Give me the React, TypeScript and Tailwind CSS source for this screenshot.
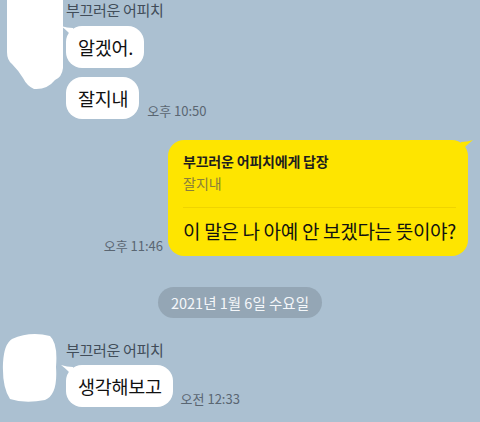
import React from "react";

const font = { fontFamily: '"Noto Sans CJK KR", "Noto Sans", sans-serif' };

function LeftTail() {
  return (
    <svg className="absolute left-[-5px] top-[0px]" width="12" height="12" viewBox="0 0 12 12">
      <path d="M0,0 Q6,2 12,2 L12,12 Q8,6 0,0 Z" fill="#ffffff" />
    </svg>
  );
}

function RightTail() {
  return (
    <svg className="absolute right-[-5px] top-[0px]" width="12" height="12" viewBox="0 0 12 12">
      <path d="M12,0 Q6,2 0,2 L0,12 Q4,6 12,0 Z" fill="#fee500" />
    </svg>
  );
}

function WhiteBubble({ text, tail }: { text: string; tail?: boolean }) {
  return (
    <div className="relative bg-white rounded-[16px] h-[42px] pl-3 pr-[11px] flex items-center text-[18.5px] text-[#111] tracking-[-0.3px] whitespace-nowrap">
      {tail && <LeftTail />}
      <span className="leading-[24px]">{text}</span>
    </div>
  );
}

function Time({ t }: { t: string }) {
  return <span className="text-[13px] leading-[16px] text-[#5a6672] whitespace-nowrap">{t}</span>;
}

export default function App() {
  return (
    <div className="w-[480px] h-[422px] bg-[#abc0d1] overflow-hidden flex flex-col" style={font}>
      {/* group 1 */}
      <div className="flex">
        <div className="w-[66px] shrink-0">
          <svg width="66" height="92" viewBox="0 0 66 92">
            <path
              d="M7,0 L63,0 L63,68 Q62,77 55,80 Q47,90 34,89 Q27,86 23,78 Q18,70 12,64 Q7,60 7,52 Z"
              fill="#ffffff"
            />
          </svg>
        </div>
        <div className="flex flex-col">
          <div className="text-[15px] leading-[20px] text-[#414d59] tracking-[-0.3px]">부끄러운 어피치</div>
          <div className="mt-[6px] flex">
            <WhiteBubble text="알겠어." tail />
          </div>
          <div className="mt-[9px] flex items-end gap-2">
            <WhiteBubble text="잘지내" />
            <div className="mb-[-2px]">
              <Time t="오후 10:50" />
            </div>
          </div>
        </div>
      </div>

      {/* yellow */}
      <div className="mt-[21px] flex justify-end items-end gap-[5px] pr-3">
        <div>
          <Time t="오후 11:46" />
        </div>
        <div className="relative bg-[#fee500] rounded-[16px] w-[300px] pl-[15px] pr-2 pt-3 pb-[13px] whitespace-nowrap">
          <RightTail />
          <div className="text-[14px] leading-[18px] font-bold text-[#1e1e1e] tracking-[-0.2px]">부끄러운 어피치에게 답장</div>
          <div className="mt-[4px] text-[14px] leading-[18px] text-[#8a7f3a]">잘지내</div>
          <div className="mt-[15px] mr-1 h-px bg-[#efd400]" />
          <div className="mt-[11px] text-[19px] leading-[24px] text-[#111] tracking-[-0.3px]">
            이 말은 나 아예 안 보겠다는 뜻이야?
          </div>
        </div>
      </div>

      {/* date pill */}
      <div className="mt-[31px] flex justify-center">
        <div className="h-[31px] px-[13px] rounded-full bg-[#94a6b5] flex items-center text-[14.5px] text-[#f4f7fa]">
          2021년 1월 6일 수요일
        </div>
      </div>

      {/* group 2 */}
      <div className="mt-[22px] flex">
        <div className="w-[66px] shrink-0">
          <svg className="mt-[-7px]" width="66" height="72" viewBox="0 0 66 72">
            <path
              d="M12,6 Q30,-2 50,3 Q58,10 56,34 Q58,62 45,67 Q25,71 10,66 Q2,54 3,30 Q4,11 12,6 Z"
              fill="#ffffff"
            />
          </svg>
        </div>
        <div className="flex flex-col">
          <div className="text-[15px] leading-[20px] text-[#414d59] tracking-[-0.3px]">부끄러운 어피치</div>
          <div className="mt-[5px] flex items-end gap-2">
            <WhiteBubble text="생각해보고" tail />
            <div className="mb-[-2px]">
              <Time t="오전 12:33" />
            </div>
          </div>
        </div>
      </div>
    </div>
  );
}
